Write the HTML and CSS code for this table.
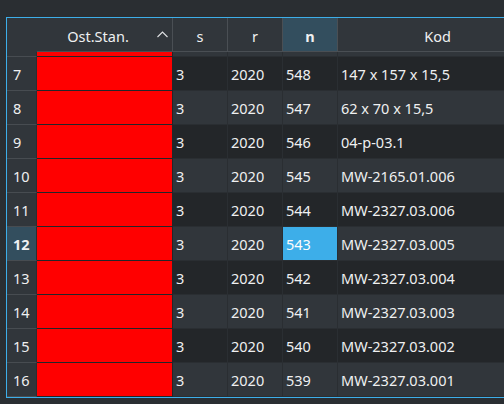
FILE: index.html
```html
<!DOCTYPE html>
<html>
<head>
<meta charset="utf-8">
<link rel="stylesheet" href="styles.css">
</head>
<body>
<div class="frame">
  <div class="table">
    <div class="row head">
      <div class="corner"></div>
      <div class="hcell sorted"><span>Ost.Stan.</span><svg class="sort" width="11" height="7" viewBox="0 0 11 7"><polyline points="0.5,6 5.5,1 10.5,6" fill="none" stroke="#dfe1e3" stroke-width="1.1"/></svg></div>
      <div class="hcell">s</div>
      <div class="hcell">r</div>
      <div class="hcell current">n</div>
      <div class="hcell">Kod</div>
    </div>
    <div class="row partial alt">
      <div class="vh"></div><div class="cell red"></div><div class="cell"></div><div class="cell"></div><div class="cell"></div><div class="cell"></div>
    </div>
    <div class="row">
      <div class="vh">7</div><div class="cell red"></div><div class="cell">3</div><div class="cell">2020</div><div class="cell">548</div><div class="cell">147 x 157 x 15,5</div>
    </div>
    <div class="row alt">
      <div class="vh">8</div><div class="cell red"></div><div class="cell">3</div><div class="cell">2020</div><div class="cell">547</div><div class="cell">62 x 70 x 15,5</div>
    </div>
    <div class="row">
      <div class="vh">9</div><div class="cell red"></div><div class="cell">3</div><div class="cell">2020</div><div class="cell">546</div><div class="cell">04-p-03.1</div>
    </div>
    <div class="row alt">
      <div class="vh">10</div><div class="cell red"></div><div class="cell">3</div><div class="cell">2020</div><div class="cell">545</div><div class="cell">MW-2165.01.006</div>
    </div>
    <div class="row">
      <div class="vh">11</div><div class="cell red"></div><div class="cell">3</div><div class="cell">2020</div><div class="cell">544</div><div class="cell">MW-2327.03.006</div>
    </div>
    <div class="row alt">
      <div class="vh current">12</div><div class="cell red"></div><div class="cell">3</div><div class="cell">2020</div><div class="cell selected">543</div><div class="cell">MW-2327.03.005</div>
    </div>
    <div class="row">
      <div class="vh">13</div><div class="cell red"></div><div class="cell">3</div><div class="cell">2020</div><div class="cell">542</div><div class="cell">MW-2327.03.004</div>
    </div>
    <div class="row alt">
      <div class="vh">14</div><div class="cell red"></div><div class="cell">3</div><div class="cell">2020</div><div class="cell">541</div><div class="cell">MW-2327.03.003</div>
    </div>
    <div class="row">
      <div class="vh">15</div><div class="cell red"></div><div class="cell">3</div><div class="cell">2020</div><div class="cell">540</div><div class="cell">MW-2327.03.002</div>
    </div>
    <div class="row alt">
      <div class="vh">16</div><div class="cell red"></div><div class="cell">3</div><div class="cell">2020</div><div class="cell">539</div><div class="cell">MW-2327.03.001</div>
    </div>
  </div>
</div>
</body>
</html>
```

FILE: styles.css
```css
html, body {
  margin: 0;
  padding: 0;
}
body {
  background: #2a2e32;
  width: 504px;
  height: 404px;
  overflow: hidden;
  font-family: "Noto Sans", "Open Sans", sans-serif;
  font-size: 14.5px;
  color: #eff0f1;
}
.frame {
  margin: 17px 0 0 6px;
  width: 498px;
  border-left: 1px solid #3daee9;
  border-top: 1px solid #3daee9;
  border-bottom: 1px solid #3daee9;
  overflow: hidden;
}
.table {
  width: 531px;
}
.row {
  display: grid;
  grid-template-columns: 30px 136px 55px 55px 55px 200px;
  height: 34px;
  background: #232629;
}
.row.alt {
  background: #31363b;
}
.row.partial {
  height: 5px;
  overflow: hidden;
}
.row > div {
  box-sizing: border-box;
  display: flex;
  align-items: center;
  white-space: nowrap;
  overflow: hidden;
  min-width: 0;
}
.cell {
  padding-left: 3px;
  border-right: 1px solid #2a2e32;
  border-bottom: 1px solid #2a2e32;
}
.cell.red {
  background: #ff0000;
  border-right-color: #232629;
  border-bottom-color: #232629;
}
.cell.selected {
  background: #3daee9;
  color: #fcfcfc;
}
.vh {
  background: #31363b;
  padding-left: 6px;
  border-right: 1px solid #2a2e32;
  border-bottom: 1px solid #474c51;
}
.vh.current {
  background: #334e5e;
  font-weight: bold;
}
.head {
  background: #31363b;
}
.corner {
  background: #31363b;
}
.hcell {
  justify-content: center;
  border-right: 1px solid #4a4f54;
  border-bottom: 1px solid #4a4f54;
  padding-top: 2px;
}
.hcell.sorted {
  position: relative;
  padding-right: 13px;
}
.hcell.sorted .sort {
  position: absolute;
  right: 4px;
  top: 13px;
}
.hcell.current {
  background: #334e5e;
  font-weight: bold;
}
```
